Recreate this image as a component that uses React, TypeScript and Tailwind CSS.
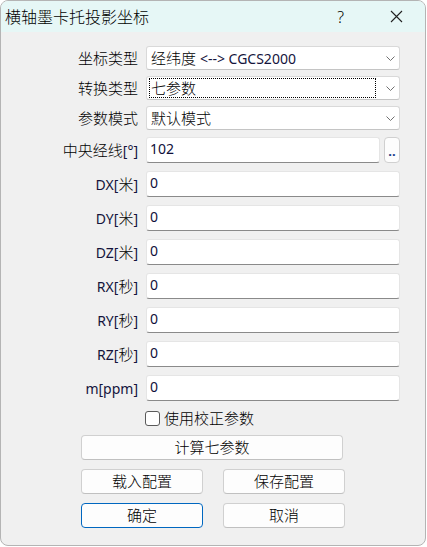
import React from 'react';

const font = { fontFamily: '"Noto Sans", "Noto Sans CJK SC", sans-serif' };

const Chevron: React.FC = () => (
  <svg width="9" height="5" viewBox="0 0 9 5" className="shrink-0">
    <path d="M0.5 0.5 L4.5 4.5 L8.5 0.5" fill="none" stroke="#707070" strokeWidth="1" />
  </svg>
);

interface ComboProps {
  value: React.ReactNode;
  focused?: boolean;
}

const Combo: React.FC<ComboProps> = ({ value, focused }) => (
  <div className="flex items-center h-[24px] bg-white border border-[#d9d9d9] border-b-[#c4c4c4] rounded-[3px] pl-[2px] pr-[4px]">
    <div
      className={
        'flex-1 h-[20px] flex items-center pl-[1px] text-[15px] leading-none text-black font-light mr-[10px] border ' +
        (focused ? 'border-dotted border-black' : 'border-transparent')
      }
    >
      {value}
    </div>
    <Chevron />
  </div>
);

const Field: React.FC<{ value: string }> = ({ value }) => (
  <div className="flex-1 h-[26px] bg-white border border-[#e5e5e5] border-b-[#8a8a8a] rounded-[3px] pl-[3px] pt-[3px] text-[14px] leading-[16px] text-[#10103a]">
    {value}
  </div>
);

const Label: React.FC<{ children: React.ReactNode }> = ({ children }) => (
  <div className="w-[139px] pr-[2px] text-right text-[15px] leading-none text-black font-light shrink-0">{children}</div>
);

const Lat: React.FC<{ children: React.ReactNode }> = ({ children }) => (
  <span className="text-[#14143c] text-[14px] font-normal">{children}</span>
);

const Btn: React.FC<{ children: React.ReactNode; primary?: boolean; className?: string }> = ({
  children,
  primary,
  className,
}) => (
  <div
    className={
      'h-[25px] flex items-center justify-center bg-[#fdfdfd] rounded-[4px] text-[15px] leading-none text-black font-light border ' +
      (primary ? 'border-[#0067c0] ' : 'border-[#d0d0d0] border-b-[#c0c0c0] ') +
      (className ?? '')
    }
  >
    {children}
  </div>
);

const params = [
  { name: 'DX', unit: '米' },
  { name: 'DY', unit: '米' },
  { name: 'DZ', unit: '米' },
  { name: 'RX', unit: '秒' },
  { name: 'RY', unit: '秒' },
  { name: 'RZ', unit: '秒' },
];

export default function App() {
  return (
    <div className="w-[427px] h-[547px] bg-white" style={font}>
      <div className="w-[426px] h-[546px] bg-[#f0f0f0] border border-[#b4b4b4] rounded-[8px] overflow-hidden flex flex-col">
        {/* title bar */}
        <div className="h-[31px] bg-[#e6f7f6] flex items-center shrink-0">
          <span className="pl-[4px] text-[16px] leading-none text-black font-light">横轴墨卡托投影坐标</span>
          <span className="ml-auto mr-[46px] text-[16px] leading-none text-black font-light">?</span>
          <svg width="13" height="13" viewBox="0 0 13 13" className="mr-[22px]">
            <path d="M1 1 L12 12 M12 1 L1 12" stroke="#222" strokeWidth="1.1" />
          </svg>
        </div>

        <div className="flex flex-col pt-[14px] pr-[25px]">
          <div className="flex items-center gap-[6px]">
            <Label>坐标类型</Label>
            <div className="flex-1">
              <Combo
                value={
                  <span>
                    经纬度 <Lat>{'<--> CGCS2000'}</Lat>
                  </span>
                }
              />
            </div>
          </div>
          <div className="flex items-center gap-[6px] mt-[6px]">
            <Label>转换类型</Label>
            <div className="flex-1">
              <Combo value="七参数" focused />
            </div>
          </div>
          <div className="flex items-center gap-[6px] mt-[6px]">
            <Label>参数模式</Label>
            <div className="flex-1">
              <Combo value="默认模式" />
            </div>
          </div>

          <div className="flex items-center gap-[6px] mt-[7px]">
            <Label>
              中央经线<Lat>[°]</Lat>
            </Label>
            <div className="flex-1 flex items-center gap-[4px]">
              <Field value="102" />
              <div className="w-[16px] h-[26px] bg-[#fdfdfd] border border-[#d0d0d0] rounded-[4px] flex items-end justify-center pb-[4px] text-[13px] leading-none text-[#1a3c8a] font-bold">
                ..
              </div>
            </div>
          </div>

          {params.map((p) => (
            <div key={p.name} className="flex items-center gap-[6px] mt-[8px]">
              <Label>
                <Lat>{p.name}[</Lat>
                {p.unit}
                <Lat>]</Lat>
              </Label>
              <Field value="0" />
            </div>
          ))}

          <div className="flex items-center gap-[6px] mt-[8px]">
            <Label>
              <Lat>m[ppm]</Lat>
            </Label>
            <Field value="0" />
          </div>

          <div className="flex items-center mt-[8px] pl-[144px] h-[18px]">
            <div className="w-[15px] h-[15px] bg-white border border-[#5a5a5a] rounded-[3px]" />
            <span className="ml-[4px] text-[15px] leading-none text-black font-light">使用校正参数</span>
          </div>

          <div className="flex flex-col gap-[9px] mt-[8px] pl-[80px]">
            <Btn className="w-[262px]">计算七参数</Btn>
            <div className="flex gap-[20px]">
              <Btn className="w-[122px]">载入配置</Btn>
              <Btn className="w-[122px]">保存配置</Btn>
            </div>
            <div className="flex gap-[20px]">
              <Btn className="w-[122px]" primary>
                确定
              </Btn>
              <Btn className="w-[122px]">取消</Btn>
            </div>
          </div>
        </div>
      </div>
    </div>
  );
}
